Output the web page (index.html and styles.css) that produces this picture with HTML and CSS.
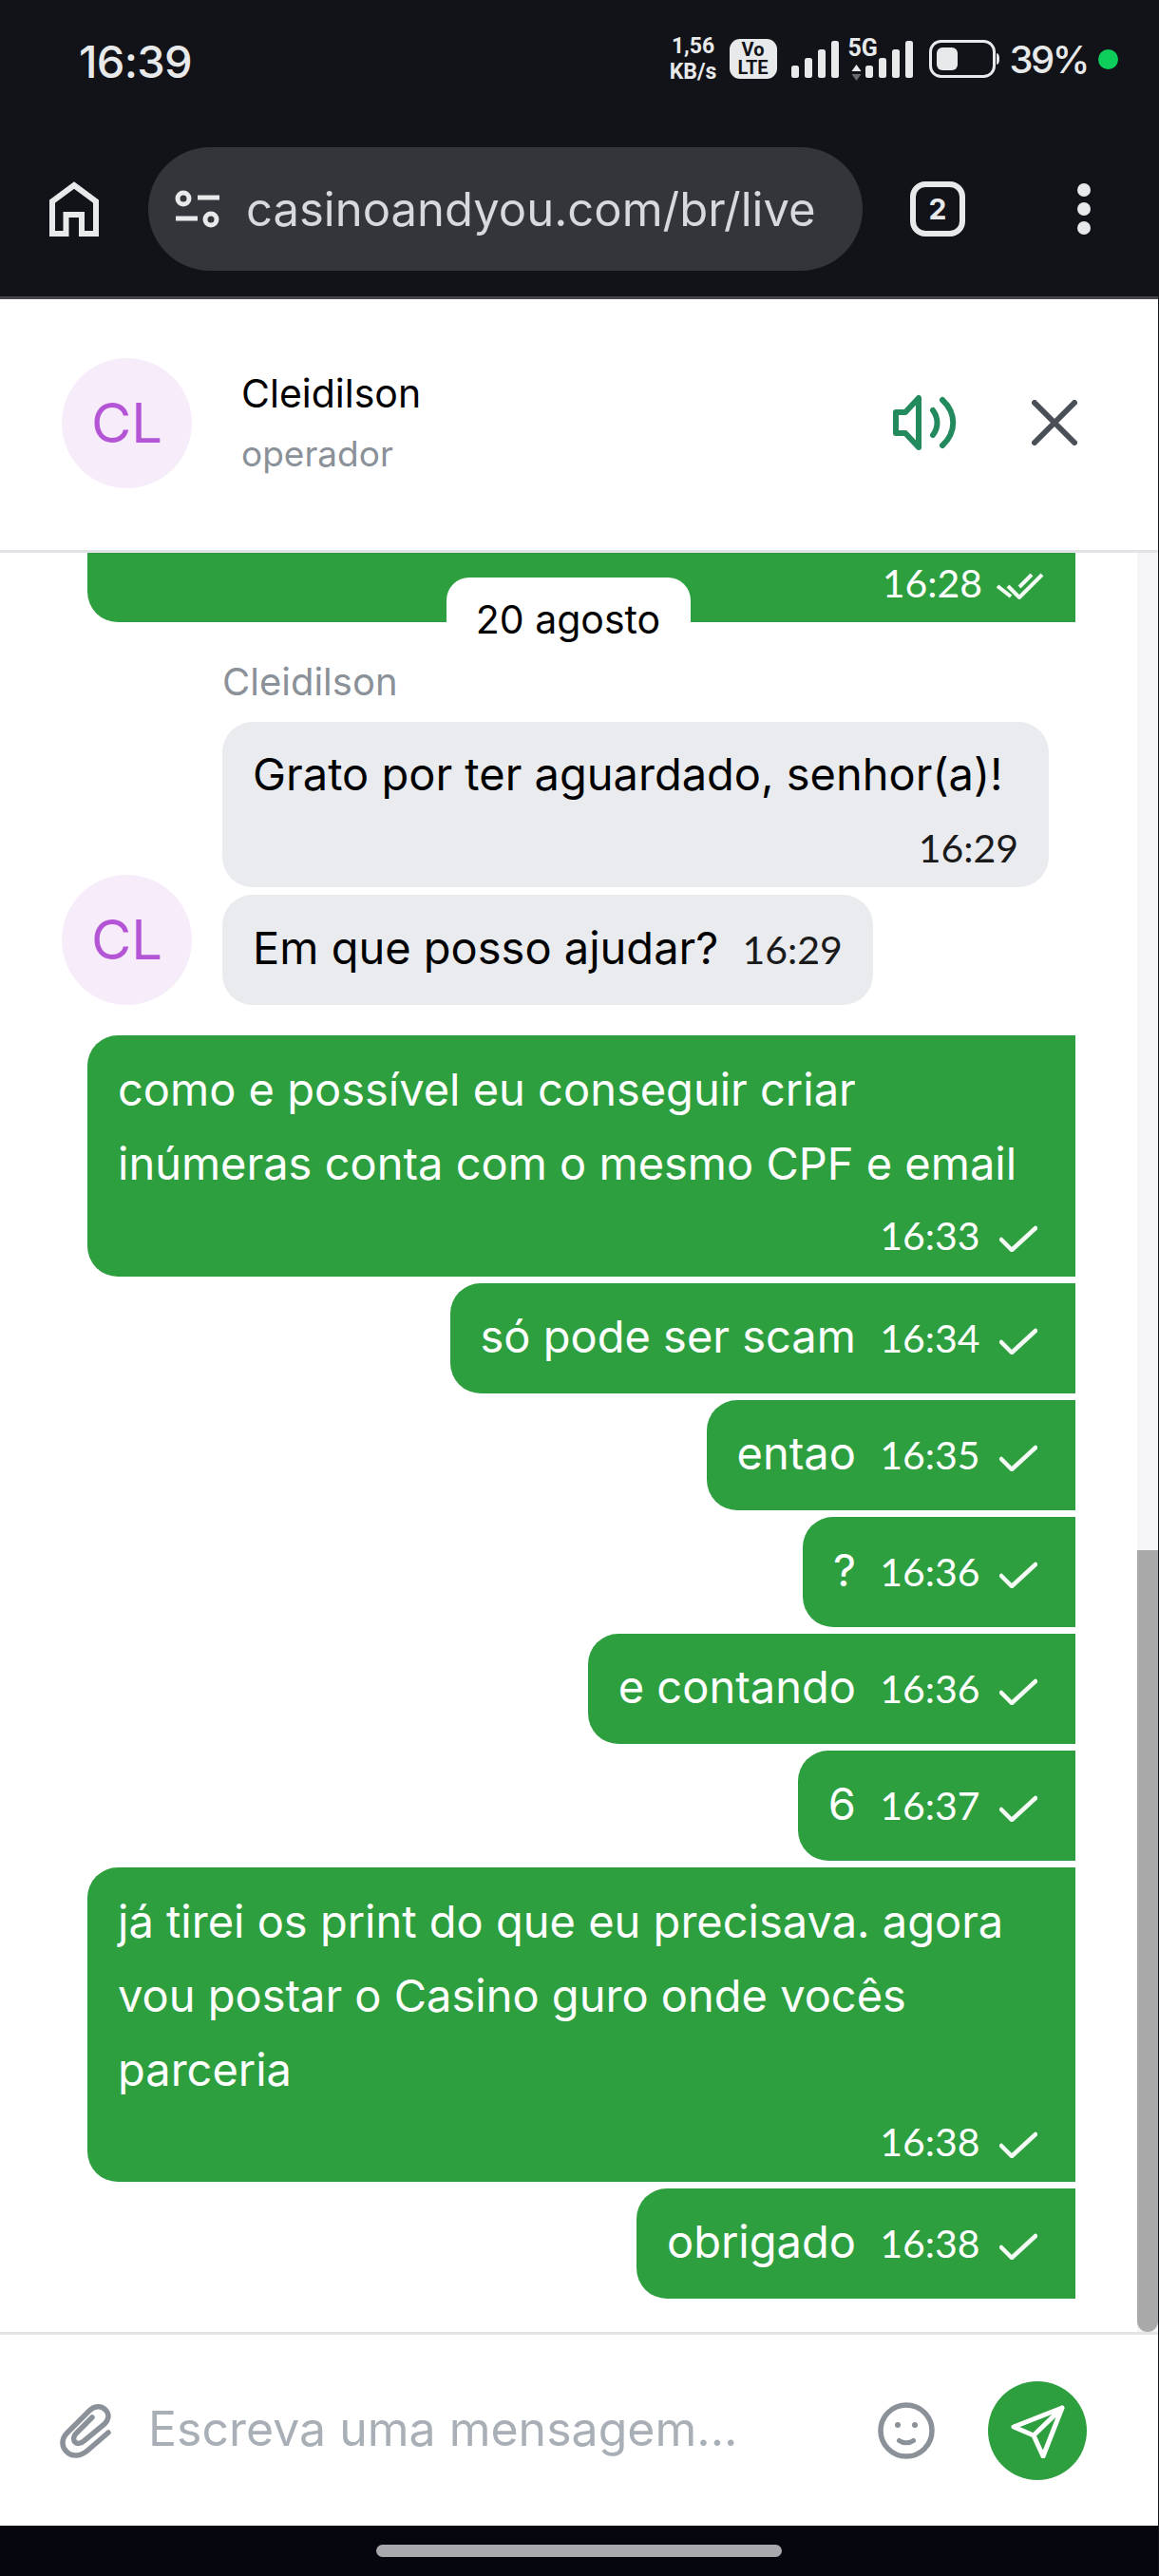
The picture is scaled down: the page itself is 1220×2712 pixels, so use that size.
FILE: index.html
```html
<!DOCTYPE html>
<html lang="en">

<head>
  <meta charset="UTF-8">
  <meta name="viewport" content="width=device-width, initial-scale=1.0">
  <title>casinoandyou.com/br/live</title>
  <link rel="stylesheet" href="styles.css">
</head>

<body>
  <div class="phone">
    <!-- barra do sistema -->
    <div class="statusbar">
      <span class="clock">16:39</span>
      <div class="status-right">
        <span class="speed">1,56<br>KB/s</span>
        <span class="volte">Vo<br>LTE</span>
        <svg class="bars" width="50" height="39" viewBox="0 0 50 39">
          <rect x="0" y="26" width="8" height="13" rx="2.5" />
          <rect x="14" y="18" width="8" height="21" rx="2.5" />
          <rect x="28" y="9" width="8" height="30" rx="2.5" />
          <rect x="42" y="0" width="8" height="39" rx="2.5" />
        </svg>
        <div class="signal-5g">
          <span class="label-5g">5G</span>
          <svg class="arrows" width="11" height="17" viewBox="0 0 11 17">
            <path d="M5.500 0L10.500 7H.5z" fill="#e8e9ea" />
            <path d="M.5 10h10l-5 7z" fill="#6a6b6e" />
          </svg>
        </div>
        <svg class="bars bars-5g" width="50" height="39" viewBox="0 0 50 39">
          <rect x="0" y="26" width="8" height="13" rx="2.5" />
          <rect x="14" y="18" width="8" height="21" rx="2.5" />
          <rect x="28" y="9" width="8" height="30" rx="2.5" />
          <rect x="42" y="0" width="8" height="39" rx="2.5" />
        </svg>
        <svg class="battery" width="74" height="40" viewBox="0 0 74 40">
          <rect x="1.500" y="1.500" width="67" height="37" rx="11" fill="none" stroke="#e8e9ea" stroke-width="3" />
          <rect x="8" y="8" width="22" height="24" rx="6" fill="#e8e9ea" />
          <path d="M71 14c2 .5 3 2 3 6s-1 5.500-3 6z" fill="#e8e9ea" />
        </svg>
        <span class="percent">39%</span>
        <span class="dot"></span>
      </div>
    </div>

    <!-- barra do navegador -->
    <div class="browserbar">
      <svg class="home" width="58" height="60" viewBox="0 0 58 60" fill="none" stroke="#e8e9ea" stroke-width="6">
        <path d="M6 56V22L29 5l23 17v34H37V36H20.500v20z" />
      </svg>
      <div class="urlbox">
        <svg width="50" height="40" viewBox="0 0 50 40" fill="none" stroke="#e8e9ea" stroke-width="5">
          <circle cx="10" cy="9" r="6" />
          <path d="M25 8h23M2 30h23" />
          <circle cx="39" cy="31" r="6" />
        </svg>
        <span class="url">casinoandyou.com/br/live</span>
      </div>
      <span class="tabs">2</span>
      <div class="menu"><i></i><i></i><i></i></div>
    </div>

    <!-- cabecalho do chat -->
    <div class="chat-head">
      <div class="avatar">CL</div>
      <div class="agent">
        <div class="agent-name">Cleidilson</div>
        <div class="agent-role">operador</div>
      </div>
      <svg class="sound" width="68" height="60" viewBox="0 0 68 60" fill="none" stroke="#238a5e" stroke-width="6" stroke-linecap="round" stroke-linejoin="round">
        <path d="M28 4v52L14 41H4V19h10z" />
        <path d="M43 17c6 8 6 18 0 26" />
        <path d="M53 6c15 14 15 34 0 48" />
      </svg>
      <svg class="close" width="48" height="48" viewBox="0 0 48 48" stroke="#4a4e57" stroke-width="6" stroke-linecap="round">
        <path d="M3 3l42 42M45 3L3 45" />
      </svg>
    </div>

    <div class="chat-body">
      <div class="messages">
        <div class="day-row">
          <div class="msg msg-out first-msg">
            <span class="meta">16:28<svg width="50" height="28" viewBox="0 0 50 28" fill="none" stroke="#f4fbf5" stroke-width="4"><path d="M1 14l14 11M12 14l12 12L48 2M24 15L37 2" /></svg></span>
          </div>
          <div class="day-pill">20 agosto</div>
        </div>

        <div class="agent-label">Cleidilson</div>
        <div class="msg msg-in wide">
          <div>Grato por ter aguardado, senhor(a)!</div>
          <span class="meta">16:29</span>
        </div>
        <div class="in-row">
          <div class="avatar">CL</div>
          <div class="msg msg-in inline">Em que posso ajudar? <span class="meta">16:29</span></div>
        </div>

        <div class="msg msg-out block gap-top">
          <div>como e possível eu conseguir criar<br>inúmeras conta com o mesmo CPF e email</div>
          <span class="meta">16:33 <svg class="tick" width="40" height="28" viewBox="0 0 40 28"><path d="M2 15l11 11L38 3" /></svg></span>
        </div>
        <div class="msg msg-out inline">só pode ser scam <span class="meta">16:34 <svg class="tick" width="40" height="28" viewBox="0 0 40 28"><path d="M2 15l11 11L38 3" /></svg></span></div>
        <div class="msg msg-out inline">entao <span class="meta">16:35 <svg class="tick" width="40" height="28" viewBox="0 0 40 28"><path d="M2 15l11 11L38 3" /></svg></span></div>
        <div class="msg msg-out inline">? <span class="meta">16:36 <svg class="tick" width="40" height="28" viewBox="0 0 40 28"><path d="M2 15l11 11L38 3" /></svg></span></div>
        <div class="msg msg-out inline">e contando <span class="meta">16:36 <svg class="tick" width="40" height="28" viewBox="0 0 40 28"><path d="M2 15l11 11L38 3" /></svg></span></div>
        <div class="msg msg-out inline">6 <span class="meta">16:37 <svg class="tick" width="40" height="28" viewBox="0 0 40 28"><path d="M2 15l11 11L38 3" /></svg></span></div>
        <div class="msg msg-out block">
          <div>já tirei os print do que eu precisava. agora<br>vou postar o Casino guro onde vocês<br>parceria</div>
          <span class="meta">16:38 <svg class="tick" width="40" height="28" viewBox="0 0 40 28"><path d="M2 15l11 11L38 3" /></svg></span>
        </div>
        <div class="msg msg-out inline">obrigado <span class="meta">16:38 <svg class="tick" width="40" height="28" viewBox="0 0 40 28"><path d="M2 15l11 11L38 3" /></svg></span></div>
      </div>
      <div class="scrollbar"><div class="thumb"></div></div>
    </div>

    <!-- campo de mensagem -->
    <div class="composer">
      <svg class="clip" width="56" height="60" viewBox="0 0 56 60" fill="none" stroke="#8b9198" stroke-width="5.500" stroke-linecap="round">
        <path d="M52 32L30 51c-7 6-16 7-22 1s-5-14 1-20L32 9c5-5 12-6 17-1s3 11-1 15L26 41c-3 3-7 3-9 1s-2-6 1-9L35 16" />
      </svg>
      <span class="placeholder">Escreva uma mensagem...</span>
      <svg class="emoji" width="60" height="60" viewBox="0 0 60 60" fill="none" stroke="#8b9198">
        <circle cx="30" cy="30" r="27" stroke-width="5.500" />
        <circle cx="21" cy="24" r="3" fill="#8b9198" stroke="none" />
        <circle cx="39" cy="24" r="3" fill="#8b9198" stroke="none" />
        <path d="M22.500 40.500c4 3 11 3 15 0" stroke-width="5" stroke-linecap="round" />
      </svg>
      <div class="send">
        <svg width="58" height="58" viewBox="0 0 58 58" fill="none" stroke="#fff" stroke-width="5" stroke-linejoin="round" stroke-linecap="round">
          <path d="M55 5L4 25l21 9 10 22zM55 5L25 34" />
        </svg>
      </div>
    </div>

    <div class="navbar"><div class="pill"></div></div>
  </div>
</body>

</html>
```
FILE: styles.css
```css
html,
body {
  margin: 0;
  padding: 0;
  width: 100%;
  height: 100%;
}

body {
  font-family: "Inter", "Noto Sans", sans-serif;
  background-color: #fff;
}

.phone {
  display: flex;
  flex-direction: column;
  box-sizing: border-box;
  width: 1220px;
  height: 2712px;
  overflow: hidden;
  border-right: 1px solid #111318;
}

/* barra do sistema */
.statusbar {
  flex: none;
  display: flex;
  justify-content: space-between;
  align-items: center;
  box-sizing: border-box;
  height: 128px;
  padding: 0 42px 0 83px;
  background-color: #111318;
  color: #e8e9ea;
}

.clock {
  font-size: 47px;
  font-weight: 500;
  letter-spacing: -0.7px;
}

.status-right {
  display: flex;
  align-items: center;
  margin-bottom: 4px;
}

.speed {
  width: 50px;
  font-family: "Roboto", sans-serif;
  font-size: 23px;
  line-height: 27px;
  font-weight: 700;
  text-align: center;
}

.volte {
  box-sizing: border-box;
  width: 50px;
  height: 42px;
  margin-left: 13px;
  padding-top: 2px;
  border-radius: 11px;
  background-color: #e8e9ea;
  color: #111318;
  font-family: "Roboto", sans-serif;
  font-size: 20px;
  line-height: 19px;
  font-weight: 700;
  text-align: center;
}

.bars {
  flex: none;
  fill: #e8e9ea;
  margin-left: 15px;
}

.signal-5g {
  display: flex;
  flex-direction: column;
  align-items: flex-start;
  gap: 7px;
  flex: none;
  width: 32px;
  margin-left: 10px;
  padding-top: 2px;
}

.label-5g {
  font-family: "Roboto", sans-serif;
  font-size: 25px;
  line-height: 20px;
  font-weight: 700;
}

.arrows {
  margin-left: 3px;
}

.bars-5g {
  margin-left: -14px;
}

.battery {
  flex: none;
  margin-left: 17px;
}

.percent {
  margin-left: 11px;
  font-size: 40px;
  font-weight: 500;
  letter-spacing: -2.5px;
}

.dot {
  width: 21px;
  height: 21px;
  margin-left: 11px;
  border-radius: 50%;
  background-color: #0dce5b;
}

/* barra do navegador */
.browserbar {
  flex: none;
  display: flex;
  align-items: center;
  box-sizing: border-box;
  height: 187px;
  padding: 0 0 0 49px;
  background-color: #111318;
  border-bottom: 3px solid #44464b;
}

.home {
  flex: none;
}

.urlbox {
  flex: none;
  display: flex;
  align-items: center;
  gap: 26px;
  box-sizing: border-box;
  width: 752px;
  height: 130px;
  margin-left: 49px;
  padding-left: 27px;
  border-radius: 65px;
  background-color: #33353a;
}

.url {
  font-size: 49px;
  color: #d8d9dc;
}

.tabs {
  flex: none;
  box-sizing: border-box;
  width: 58px;
  height: 58px;
  margin-left: 50px;
  border: 6px solid #e8e9ea;
  border-radius: 16px;
  color: #e8e9ea;
  font-size: 30px;
  font-weight: 700;
  line-height: 46px;
  text-align: center;
}

.menu {
  display: flex;
  flex-direction: column;
  gap: 6px;
  margin-left: 118px;
}

.menu i {
  display: block;
  width: 14px;
  height: 14px;
  border-radius: 50%;
  background-color: #e8e9ea;
}

/* cabecalho */
.chat-head {
  flex: none;
  display: flex;
  align-items: center;
  box-sizing: border-box;
  height: 267px;
  padding: 0 0 4px 65px;
  border-bottom: 3px solid #e2e3e6;
}

.avatar {
  flex: none;
  width: 137px;
  height: 137px;
  border-radius: 50%;
  background-color: #f7edfa;
  color: #b455d6;
  font-size: 58px;
  line-height: 137px;
  text-align: center;
}

.agent {
  flex: 1;
  margin-left: 52px;
}

.agent-name {
  font-size: 41px;
  line-height: 66px;
  color: #000;
}

.agent-role {
  font-size: 37px;
  line-height: 62px;
  color: #8b9198;
}

.close {
  margin: 0 85px 0 79px;
}

/* corpo do chat */
.chat-body {
  flex: none;
  display: flex;
  height: 1873px;
  overflow: hidden;
}

.messages {
  flex: 1;
  display: flex;
  flex-direction: column;
  align-items: flex-end;
  box-sizing: border-box;
  padding: 0 65px 32px 92px;
  min-width: 0;
}

.messages > * {
  flex: none;
}

.scrollbar {
  flex: none;
  width: 22px;
  background-color: #f5f5f7;
}

.thumb {
  height: 823px;
  margin-top: 1050px;
  border-radius: 0 0 11px 11px;
  background-color: #a9a9a9;
}

.day-row {
  align-self: stretch;
  height: 115px;
  display: flex;
  flex-direction: column;
}

.day-pill {
  box-sizing: border-box;
  align-self: center;
  width: 257px;
  height: 70px;
  margin: -47px 28px 0 0;
  padding-top: 11px;
  border-radius: 24px 24px 0 0;
  background-color: #fff;
  color: #000;
  font-size: 41px;
  line-height: 66px;
  text-align: center;
}

.agent-label {
  align-self: flex-start;
  margin: 0 0 0 142px;
  height: 42px;
  font-size: 40px;
  line-height: 42px;
  color: #8b9198;
}

.msg {
  box-sizing: border-box;
  font-size: 47px;
  line-height: 78px;
}

.day-row .first-msg {
  height: 73px;
  padding: 0 33px 0 0;
  border-radius: 0 0 0 32px;
  line-height: 60px;
  text-align: right;
}

.meta {
  margin-left: 12px;
  font-family: "Lato", sans-serif;
  font-size: 41px;
  white-space: nowrap;
}

.msg-in {
  align-self: flex-start;
  background-color: #e9ebef;
  color: #000;
  border-radius: 32px;
}

.msg-in .meta {
  color: #1a1a1a;
}

.msg-out {
  background-color: #2e9f3f;
  color: #fff;
  border-radius: 32px 0 0 32px;
}

.meta svg {
  vertical-align: -2px;
  margin-left: 10px;
}

.first-msg .meta svg {
  margin-left: 15px;
}

.tick {
  fill: none;
  stroke: #f4fbf5;
  stroke-width: 4.500;
  stroke-linecap: round;
  stroke-linejoin: round;
}

.wide {
  width: 870px;
  height: 174px;
  margin: 21px 0 8px 142px;
  padding: 16px 32px 0;
}

.wide .meta {
  display: block;
  margin-top: 11px;
  line-height: 56px;
  text-align: right;
}

.in-row {
  align-self: flex-start;
  display: flex;
  align-items: flex-end;
  gap: 32px;
  margin-left: -27px;
  height: 116px;
}

.in-row .msg-in {
  height: 116px;
}

.inline {
  height: 116px;
  padding: 17px 40px 0 32px;
  margin-top: 7px;
}

.in-row .inline {
  margin-top: 0;
  padding-right: 32px;
}

.block {
  align-self: stretch;
  padding: 18px 40px 0 32px;
  margin-top: 7px;
}

.block .meta {
  display: block;
  line-height: 74px;
  text-align: right;
}

.gap-top {
  margin-top: 32px;
  height: 254px;
}

.block:not(.gap-top) {
  height: 331px;
}

/* campo de mensagem */
.composer {
  flex: none;
  display: flex;
  align-items: center;
  box-sizing: border-box;
  height: 204px;
  padding: 0 0 0 62px;
  border-top: 3px solid #e2e3e6;
}

.clip {
  flex: none;
}

.placeholder {
  flex: 1;
  margin-left: 38px;
  padding-bottom: 4px;
  font-size: 50px;
  color: #a9afb6;
}

.emoji {
  flex: none;
}

.send {
  flex: none;
  display: flex;
  align-items: center;
  justify-content: center;
  width: 104px;
  height: 104px;
  margin: 0 75px 0 56px;
  border-radius: 50%;
  background-color: #2e9f3f;
}

.navbar {
  flex: 1;
  display: flex;
  justify-content: center;
  padding-top: 20px;
  background-color: #06060f;
}

.pill {
  width: 427px;
  height: 13px;
  border-radius: 7px;
  background-color: #a8a8ad;
}
```
